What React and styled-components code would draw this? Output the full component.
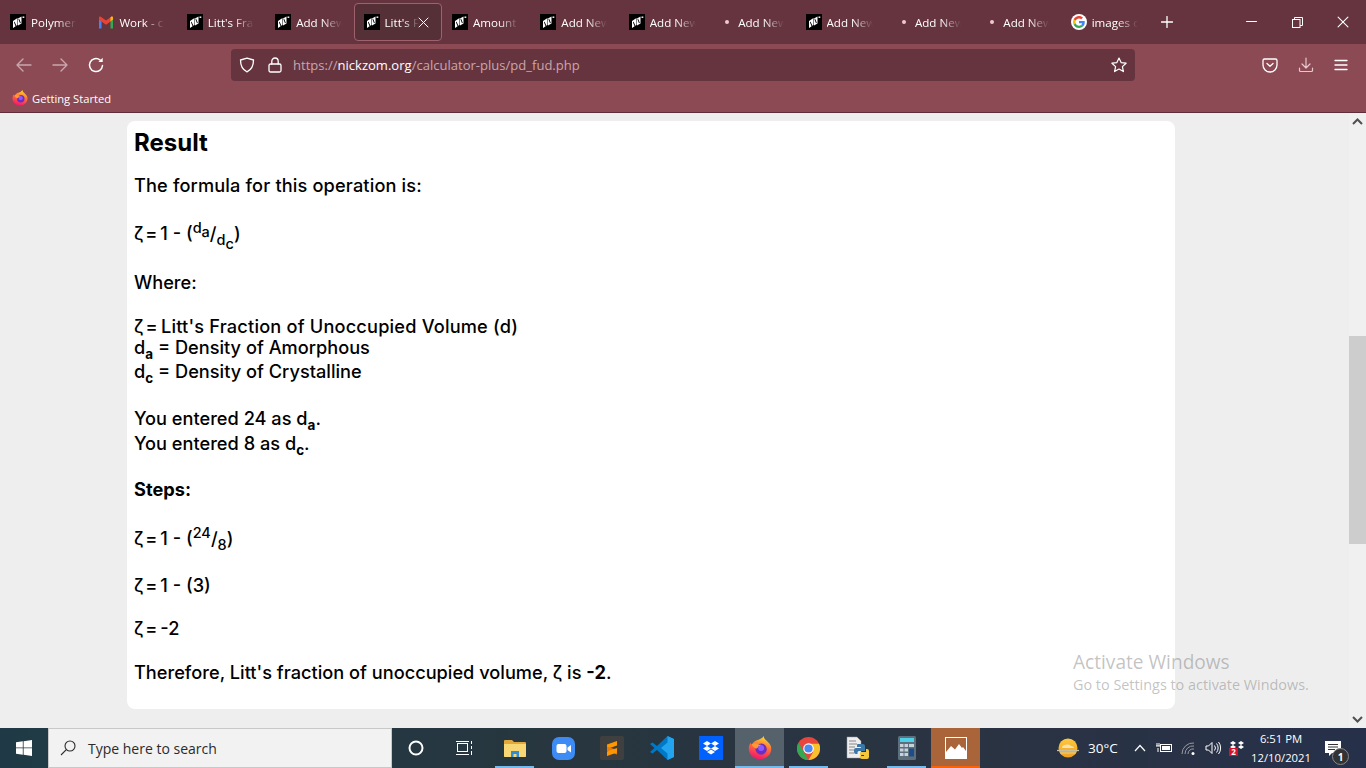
import React from 'react';
import styled, { createGlobalStyle } from 'styled-components';

const GlobalStyle = createGlobalStyle`
  html, body { margin: 0; height: 100%; overflow: hidden; }
  body { font-family: "Open Sans", "Liberation Sans", sans-serif; background: #eeeeee; }
  * { box-sizing: border-box; }
`;

const Screen = styled.div`
  position: relative;
  width: 1366px;
  height: 768px;
  display: flex;
  flex-direction: column;
  overflow: hidden;
`;

/* browser chrome */
const TabStrip = styled.div`
  height: 44px;
  display: flex;
  align-items: center;
  background: #66343f;
`;

const Tab = styled.div`
  position: relative;
  width: 88.4px;
  height: 38px;
  flex: none;
  display: flex;
  align-items: center;
  gap: 5px;
  padding-left: 9px;
  color: #fff;
  font-size: 11.6px;
  border-radius: 4px;
  border: 1px solid ${(p) => (p.$active ? '#a0616e' : 'transparent')};
  background: ${(p) => (p.$active ? '#553037' : 'transparent')};
`;

const TabIcon = styled.span`
  width: 16px;
  height: 16px;
  flex: none;
  display: flex;
  align-items: center;
  justify-content: center;
`;

const TabDot = styled.span`
  width: 4px;
  height: 4px;
  margin-left: 4px;
  border-radius: 50%;
  background: #f0c8cf;
`;

const TabTitle = styled.span`
  width: ${(p) => (p.$active ? '34px' : '46px')};
  white-space: nowrap;
  overflow: hidden;
  -webkit-mask-image: linear-gradient(to right, #000 55%, transparent 100%);
  mask-image: linear-gradient(to right, #000 55%, transparent 100%);
`;

const TabClose = styled.span`
  position: absolute;
  right: 12px;
  top: 13px;
  display: flex;
`;

const NewTab = styled.div`
  width: 12px;
  margin-left: 12px;
  display: flex;
`;

const WindowButtons = styled.div`
  margin-left: auto;
  display: flex;
`;

const WindowButton = styled.div`
  width: 46px;
  height: 44px;
  display: flex;
  align-items: center;
  justify-content: center;
`;

const Toolbar = styled.div`
  height: 41px;
  display: flex;
  align-items: center;
  background: #8c4a55;
`;

const NavGroup = styled.div`
  width: 231px;
  padding-left: 15px;
  display: flex;
  gap: 18px;
`;

const UrlBar = styled.div`
  width: 904px;
  height: 32px;
  display: flex;
  align-items: center;
  padding: 0 8px;
  border-radius: 4px;
  background: #66343f;
`;

const UrlText = styled.div`
  margin-left: 11px;
  flex: 1;
  font-size: 13.05px;
  color: #c9a6ac;
  span { color: #fff; }
`;

const ToolRight = styled.div`
  display: flex;
  margin-left: 127px;
  gap: 19.5px;
`;

const Bookmarks = styled.div`
  height: 28px;
  display: flex;
  align-items: center;
  gap: 4px;
  padding: 0 0 1px 12px;
  font-size: 11.2px;
  color: #fff;
  background: #8c4a55;
  border-bottom: 1px solid #5e2f3a;
`;

/* page */
const Viewport = styled.div`
  flex: 1;
  display: flex;
  background: #eeeeee;
`;

const Content = styled.div`
  width: 1349px;
  padding: 8px 0 0 127px;
`;

const Card = styled.div`
  width: 1048px;
  height: 588px;
  padding: 8px 7px 0;
  background: #fff;
  border-radius: 8px;
  color: #000;
  font-family: Inter, "Open Sans", sans-serif;
  font-size: 18.2px;
  font-weight: 500;
`;

const Heading = styled.h2`
  margin: 0;
  height: 28px;
  line-height: 28px;
  font-size: 24px;
  font-weight: 700;
`;

const Line = styled.div`
  height: 24px;
  line-height: 24px;
  margin-top: ${(p) => p.$gap}px;
  white-space: nowrap;
  letter-spacing: ${(p) => p.$spacing || 0}px;
  font-weight: ${(p) => (p.$bold ? 700 : 500)};
  sup, sub { font-size: 14.5px; line-height: 0; }
  b { font-weight: 700; font-size: 13.5px; }
`;

const Zeta = styled.span`
  word-spacing: -3px;
  margin-right: 1px;
`;

const Scrollbar = styled.div`
  width: 17px;
  display: flex;
  flex-direction: column;
  align-items: center;
  background: #f0f0f0;
`;

const ScrollArrow = styled.div`
  height: 17px;
  display: flex;
  align-items: center;
  justify-content: center;
  margin-top: ${(p) => (p.$bottom ? 'auto' : '0')};
`;

const ScrollThumb = styled.div`
  width: 17px;
  height: 208px;
  margin-top: 206px;
  background: #cdcdcd;
`;

const Watermark = styled.div`
  position: absolute;
  left: 1073px;
  top: 653px;
  color: rgba(110, 110, 110, 0.42);
  line-height: 1;
  pointer-events: none;
`;

const WatermarkTitle = styled.div`
  font-size: 19.1px;
  margin-bottom: 6px;
`;

const WatermarkText = styled.div`
  font-size: 14.4px;
  white-space: nowrap;
`;

/* taskbar */
const Taskbar = styled.div`
  height: 40px;
  display: flex;
  align-items: stretch;
  background: linear-gradient(to right, #1f3a46 0%, #27363f 40%, #2a3343 75%, #26304a 100%);
  color: #fff;
`;

const StartButton = styled.div`
  width: 48px;
  display: flex;
  align-items: center;
  justify-content: center;
`;

const SearchBox = styled.div`
  width: 344px;
  display: flex;
  align-items: center;
  padding-left: 11px;
  gap: 12px;
  font-size: 14px;
  color: #2b2b2b;
  background: #f2f2f2;
  border: 1px solid #c8c8c8;
`;

const TaskItem = styled.div`
  position: relative;
  width: ${(p) => p.$w || 49}px;
  display: flex;
  align-items: center;
  justify-content: center;
  background: ${(p) => p.$bg || 'transparent'};
  &::after {
    content: '';
    display: ${(p) => (p.$line ? 'block' : 'none')};
    position: absolute;
    left: ${(p) => p.$inset || 0}px;
    right: ${(p) => p.$inset || 0}px;
    bottom: 0;
    height: 2px;
    background: ${(p) => p.$line};
  }
`;

const Tray = styled.div`
  margin-left: auto;
  padding-right: 17px;
  display: flex;
  align-items: center;
  font-size: 13.5px;
`;

const Temperature = styled.span`
  margin: 0 10px 0 9px;
`;

const TrayIcon = styled.div`
  width: 24.25px;
  display: flex;
  align-items: center;
  justify-content: center;
`;

const Clock = styled.div`
  width: 64px;
  font-size: 11.3px;
  line-height: 19px;
  text-align: center;
`;

const Notify = styled.div`
  position: relative;
  width: 32px;
  height: 40px;
  margin-left: 4px;
  display: flex;
  align-items: center;
  justify-content: center;
`;

const NotifyBadge = styled.span`
  position: absolute;
  left: 15px;
  top: 20px;
  width: 17px;
  height: 17px;
  display: flex;
  align-items: center;
  justify-content: center;
  border-radius: 50%;
  border: 1.5px solid #888;
  background: #333;
  font-size: 10px;
  font-weight: 700;
`;

/* icons */
const stroke = { fill: 'none', stroke: 'currentColor', strokeLinecap: 'round', strokeLinejoin: 'round' };

const Nickzom = () => (
  <svg width="16" height="16" viewBox="0 0 16 16">
    <rect width="16" height="16" fill="#000" />
    <path d="M3 7 7.500 4V11L3 14ZM8 4.500 11.500 2.500V9.500L8 11.500Z" fill="#fff" />
    <path d="M4.500 7.500 6.500 12 5.700 12.500 4 8.500ZM9 4.500 10.800 8.800 10 9.300 8.500 5.500Z" fill="#000" />
    <rect x="12.500" y="2.500" width="1.800" height="1.400" fill="#fff" />
  </svg>
);

const Gmail = () => (
  <svg width="16" height="13" viewBox="0 0 16 13">
    <path d="M1 12.500V3l2.500 2v7.500Z" fill="#4285f4" />
    <path d="M12.500 12.500V5L15 3v9.500Z" fill="#34a853" />
    <path d="M1 3.500V1.500C1 .6 2 .1 2.800.7L8 4.600 13.200.7C14 .1 15 .6 15 1.500V3.500L12.500 5.400 8 8.700 3.500 5.400Z" fill="#ea4335" />
    <path d="M12.500 5.400 15 3.500V1.500C15 .6 14 .1 13.200.7L12.500 1.200Z" fill="#fbbc04" />
  </svg>
);

const GoogleG = () => (
  <svg width="16" height="16" viewBox="0 0 48 48">
    <circle cx="24" cy="24" r="24" fill="#fff" />
    <g transform="translate(6 6) scale(.75)">
      <path fill="#ea4335" d="M24 9.500c3.500 0 6.700 1.200 9.200 3.600l6.800-6.800C35.900 2.400 30.500 0 24 0 14.600 0 6.500 5.400 2.600 13.200l8 6.200C12.400 13.700 17.700 9.500 24 9.500z" />
      <path fill="#4285f4" d="M47 24.500c0-1.600-.1-3.100-.4-4.500H24v9h12.900c-.6 3-2.200 5.500-4.700 7.200l7.700 6C44.400 37.900 47 31.800 47 24.500z" />
      <path fill="#fbbc05" d="M10.500 28.600c-.5-1.400-.8-3-.8-4.600s.3-3.200.8-4.600l-8-6.200C.9 16.400 0 20.100 0 24s.9 7.600 2.600 10.800z" />
      <path fill="#34a853" d="M24 48c6.500 0 11.900-2.100 15.900-5.800l-7.700-6c-2.100 1.400-4.900 2.300-8.200 2.300-6.300 0-11.600-4.200-13.500-9.900l-8 6.200C6.500 42.600 14.600 48 24 48z" />
    </g>
  </svg>
);

const Firefox = ({ size = 16, id = 'ff' }) => (
  <svg width={size} height={size} viewBox="0 0 32 32">
    <defs>
      <linearGradient id={id} x1=".7" y1="0" x2=".4" y2="1">
        <stop offset="0" stopColor="#ffe226" />
        <stop offset=".45" stopColor="#ff7139" />
        <stop offset="1" stopColor="#f5156c" />
      </linearGradient>
    </defs>
    <path d="M21 0c0 4 3 5 5.500 8C30 11 31 14 31 17c0 8-7 14-15 14S1 25 1 17c0-3 1-6 2.500-8 .2 1.500.8 2.500 1.800 3C6 9 8.500 7 11 6c4-1.500 8-2.500 10-6Z" fill={`url(#${id})`} />
    <circle cx="17.500" cy="17.500" r="7.500" fill="#6a2fc0" />
    <circle cx="17.500" cy="16" r="4" fill="#9059ff" />
    <path d="M4.500 11c3-1.500 6-1.800 8.500-.5 2 1 3 1 4.500 1-1.500 1.500-3 2-4 2 .3 1.500-1 2.500-2.500 3-2.500-.5-5-2.500-6.500-5.500Z" fill="#ff9a2e" />
  </svg>
);

const Back = () => (
  <svg width="18" height="18" viewBox="0 0 18 18" color="#c9a6ac" {...stroke} strokeWidth="1.400">
    <path d="M16 9H2M8 3 2 9l6 6" />
  </svg>
);

const Forward = () => (
  <svg width="18" height="18" viewBox="0 0 18 18" color="#c9a6ac" {...stroke} strokeWidth="1.400">
    <path d="M2 9h14M10 3l6 6-6 6" />
  </svg>
);

const Reload = () => (
  <svg width="18" height="18" viewBox="0 0 18 18" color="#fff" {...stroke} strokeWidth="1.500">
    <path d="M15.500 9.500A6.500 6.500 0 1 1 13 3.900" />
    <path d="M15.700 1.800v4.300h-4.300z" fill="#fff" stroke="none" />
  </svg>
);

const Shield = () => (
  <svg width="16" height="16" viewBox="0 0 16 16" color="#fff" {...stroke} strokeWidth="1.300">
    <path d="M8 1.200 14.500 3c0 6-1.500 9.500-6.500 11.800C3 12.500 1.500 9 1.500 3Z" />
  </svg>
);

const Lock = () => (
  <svg width="14" height="16" viewBox="0 0 14 16" color="#fff" {...stroke} strokeWidth="1.300" style={{ marginLeft: 13 }}>
    <rect x="1" y="7" width="12" height="8" rx="1.500" />
    <path d="M3.800 7V4.200a3.200 3.200 0 0 1 6.400 0V7" />
  </svg>
);

const Star = () => (
  <svg width="16" height="16" viewBox="0 0 16 16" color="#fff" {...stroke} strokeWidth="1.200">
    <path d="M8 1l2.100 4.600 5 .6-3.700 3.400 1 5L8 12.100 3.600 14.600l1-5L.9 6.200l5-.6Z" />
  </svg>
);

const Pocket = () => (
  <svg width="16" height="16" viewBox="0 0 16 16" color="#fff" {...stroke} strokeWidth="1.300">
    <path d="M2.500 2h11A1.500 1.500 0 0 1 15 3.500V8A7 7 0 0 1 1 8V3.500A1.500 1.500 0 0 1 2.500 2Z" />
    <path d="M5 6.500 8 9.300l3-2.800" />
  </svg>
);

const Download = () => (
  <svg width="16" height="16" viewBox="0 0 16 16" color="#e8c6cc" {...stroke} strokeWidth="1.200">
    <path d="M8 1v9.500M4 7l4 4 4-4M1.500 11v2.500a1 1 0 0 0 1 1h11a1 1 0 0 0 1-1V11" />
  </svg>
);

const Menu = () => (
  <svg width="16" height="16" viewBox="0 0 16 16" color="#fff" {...stroke} strokeWidth="1.300">
    <path d="M2 3.500h12M2 8h12M2 12.500h12" />
  </svg>
);

const CloseGlyph = ({ size = 11 }) => (
  <svg width={size} height={size} viewBox="0 0 11 11" color="#fff" {...stroke} strokeWidth="1">
    <path d="M1 1l9 9M10 1l-9 9" />
  </svg>
);

const Plus = () => (
  <svg width="12" height="12" viewBox="0 0 12 12" color="#fff" {...stroke} strokeWidth="1.300">
    <path d="M6 .5v11M.5 6h11" />
  </svg>
);

const Minimize = () => (
  <svg width="11" height="11" viewBox="0 0 11 11" color="#fff" {...stroke} strokeWidth="1">
    <path d="M.5 4.500h10" />
  </svg>
);

const Restore = () => (
  <svg width="11" height="11" viewBox="0 0 11 11" color="#fff" fill="none" stroke="currentColor" strokeWidth="1">
    <rect x=".5" y="2.500" width="7.500" height="8" />
    <path d="M2.500 2.500V.5h8v8H8" />
  </svg>
);

const Chevron = ({ up }) => (
  <svg width="11" height="7" viewBox="0 0 11 7" fill="none" stroke="#505050" strokeWidth="2">
    <path d={up ? 'M1 6l4.500-4.500L10 6' : 'M1 1l4.500 4.500L10 1'} />
  </svg>
);

const WindowsLogo = () => (
  <svg width="16" height="16" viewBox="0 0 16 16" fill="#fff">
    <path d="M0 2.300 6.800 1.300V7.500H0ZM7.600 1.200 16 0V7.500H7.600ZM0 8.300H6.800V14.700L0 13.700ZM7.600 8.300H16V16L7.600 14.800Z" />
  </svg>
);

const SearchGlyph = () => (
  <svg width="16" height="16" viewBox="0 0 16 16" fill="none" stroke="#2b2b2b" strokeWidth="1.100">
    <circle cx="10" cy="6" r="5" />
    <path d="M6.300 9.700 1 15" />
  </svg>
);

const Cortana = () => (
  <svg width="16" height="16" viewBox="0 0 16 16" fill="none" stroke="#fff" strokeWidth="2" style={{ marginRight: 2 }}>
    <circle cx="8" cy="8" r="6.500" />
  </svg>
);

const TaskView = () => (
  <svg width="17" height="16" viewBox="0 0 17 16" fill="none" stroke="#fff" strokeWidth="1" style={{ marginRight: 2 }}>
    <rect x="1.500" y="3.500" width="10" height="8" />
    <path d="M0 1.500h13M0 14.500h13M15.500 1v3M15.500 6v3M15.500 11v4" />
  </svg>
);

const Explorer = () => (
  <svg width="22" height="20" viewBox="0 0 22 20">
    <path d="M0 3a1 1 0 0 1 1-1h7l2 2h11a1 1 0 0 1 1 1v13a1 1 0 0 1-1 1H1a1 1 0 0 1-1-1Z" fill="#e2a93a" />
    <path d="M0 6h22v12a1 1 0 0 1-1 1H1a1 1 0 0 1-1-1Z" fill="#f8d775" />
    <path d="M7 13h8v6h-2.500v-3h-3v3H7Z" fill="#2f8fd6" />
  </svg>
);

const Zoom = () => (
  <svg width="23" height="23" viewBox="0 0 23 23">
    <rect width="23" height="23" rx="7" fill="#3d8cf5" />
    <rect x="4.500" y="7" width="10" height="9" rx="2" fill="#fff" />
    <path d="M15.500 10.500 19 8v7.500l-3.500-2.500Z" fill="#fff" />
  </svg>
);

const Sublime = () => (
  <svg width="24" height="24" viewBox="0 0 24 24" style={{ marginRight: 2 }}>
    <rect width="24" height="24" rx="2" fill="#3f3f3f" />
    <path d="M7 8.500 17 5v4.500L7 13Z" fill="#ff9800" />
    <path d="M7 10.500l10 3.500v4.500L7 15Z" fill="#e97c0c" />
    <path d="M7 15.500 17 12v4.500L7 20Z" fill="#ff9800" />
  </svg>
);

const VSCode = () => (
  <svg width="24" height="24" viewBox="0 0 24 24">
    <path d="M17.500 0 24 3v18l-6.500 3L7 14l-4.500 3.500L0 16l4.500-4L0 8l2.500-1.500L7 10Z" fill="#0078c8" />
    <path d="M17.500 0 24 3v18l-6.500 3Zm0 6.500L11 12l6.500 5.500Z" fill="#22a5ee" fillRule="evenodd" />
  </svg>
);

const DropboxTile = () => (
  <svg width="24" height="24" viewBox="0 0 24 24">
    <rect width="24" height="24" fill="#0061fe" />
    <path d="M8 5l4 2.500L8 10 4 7.500ZM16 5l4 2.500L16 10l-4-2.500ZM8 10l4 2.500L8 15l-4-2.500ZM16 10l4 2.500L16 15l-4-2.500ZM8 16l4-2.500 4 2.500-4 2.500Z" fill="#fff" />
  </svg>
);

const Chrome = () => (
  <svg width="23" height="23" viewBox="0 0 24 24">
    <circle cx="12" cy="12" r="12" fill="#e8453c" />
    <path d="M1.600 6 7 15.500 12 24A12 12 0 0 1 1.600 6Z" fill="#34a853" />
    <path d="M12 24l5-8.500L12 7h11A12 12 0 0 1 12 24Z" fill="#fbc02d" />
    <circle cx="12" cy="12" r="5.500" fill="#fff" />
    <circle cx="12" cy="12" r="4.300" fill="#4a8af4" />
  </svg>
);

const PythonFile = () => (
  <svg width="24" height="24" viewBox="0 0 24 24">
    <path d="M1 1h10l4 4v17H1Z" fill="#eee" stroke="#999" strokeWidth=".5" />
    <path d="M3 5h7M3 8h8M3 11h6M3 14h5M3 17h5" stroke="#888" strokeWidth="1" />
    <path d="M12 8h5a2 2 0 0 1 2 2v5h-6a1.500 1.500 0 0 0-1.500 1.500V18H10a2 2 0 0 1-2-2v-2a2 2 0 0 1 2-2h5v-1h-4V9a1 1 0 0 1 1-1Z" fill="#3b77a8" />
    <path d="M21 23h-5a2 2 0 0 1-2-2v-1h4v-1h-4v-2a1 1 0 0 1 1-1h5v-3h1a2 2 0 0 1 2 2v6a2 2 0 0 1-2 2Z" fill="#f5c83c" />
  </svg>
);

const Calculator = () => (
  <svg width="18" height="24" viewBox="0 0 18 24">
    <rect width="18" height="24" rx="1.500" fill="#5d6e7c" />
    <rect x="2" y="2" width="14" height="4" fill="#4dd0e8" />
    <g fill="#c7d2da">
      <rect x="2" y="8" width="3.500" height="3" /><rect x="6.500" y="8" width="3.500" height="3" /><rect x="11" y="8" width="5" height="3" />
      <rect x="2" y="12.500" width="3.500" height="3" /><rect x="6.500" y="12.500" width="3.500" height="3" />
      <rect x="2" y="17" width="3.500" height="3" /><rect x="6.500" y="17" width="3.500" height="3" />
    </g>
    <rect x="11" y="12.500" width="5" height="8" fill="#1d4e89" />
  </svg>
);

const Photos = () => (
  <svg width="22" height="22" viewBox="0 0 22 22">
    <rect x=".5" y=".5" width="21" height="21" fill="none" stroke="#fff" />
    <path d="M1 21V15l5-6 4 3.500L14 7l3 4 1-1 3 4v7Z" fill="#fff" />
  </svg>
);

const Weather = () => (
  <svg width="22" height="20" viewBox="0 0 22 20">
    <defs>
      <linearGradient id="sun" x1="0" y1="0" x2="0" y2="1">
        <stop offset="0" stopColor="#ffc83d" />
        <stop offset="1" stopColor="#f0a020" />
      </linearGradient>
    </defs>
    <circle cx="11" cy="10" r="9.500" fill="url(#sun)" />
    <path d="M5 9c2-3 7-3 9-1 2 0 3 1 3 2H5Z" fill="#f3e2b0" />
    <path d="M0 12.500h22" stroke="#c9bfa2" strokeWidth="1.300" />
    <path d="M3 15h16" stroke="#e0c88a" strokeWidth="1.300" />
  </svg>
);

const TrayChevron = () => (
  <svg width="12" height="8" viewBox="0 0 12 8" fill="none" stroke="#fff" strokeWidth="1.200">
    <path d="M1 7l5-5.500L11 7" />
  </svg>
);

const Battery = () => (
  <svg width="16" height="12" viewBox="0 0 16 12" fill="none" stroke="#fff">
    <rect x="4.500" y="2.500" width="11" height="7" />
    <rect x="6" y="4" width="8" height="4" fill="#fff" stroke="none" />
    <path d="M1 1v3M3 1v3M0 4h4M2 6v4" />
  </svg>
);

const Wifi = () => (
  <svg width="14" height="13" viewBox="0 0 14 13" fill="none" stroke="#9a9a9a" strokeWidth="1">
    <path d="M1 12A11 11 0 0 1 13 1M4 12a8 8 0 0 1 9-8M7 12a5 5 0 0 1 6-5" />
    <circle cx="12" cy="11.500" r="1.500" fill="#fff" stroke="none" />
  </svg>
);

const Speaker = () => (
  <svg width="16" height="14" viewBox="0 0 16 14" fill="none" stroke="#fff" strokeWidth="1">
    <path d="M1 5h2.500L7 1.500v11L3.500 9H1ZM9.500 4.500a4 4 0 0 1 0 5M11.500 2.500a7 7 0 0 1 0 9M13.500 1a9.500 9.500 0 0 1 0 12" />
  </svg>
);

const TrayDropbox = () => (
  <svg width="16" height="16" viewBox="0 0 16 16">
    <path d="M4 1l3 2-3 2-3-2ZM12 1l3 2-3 2-3-2ZM4 5l3 2-3 2-3-2ZM12 5l3 2-3 2-3-2Z" fill="#fff" />
    <rect x="0" y="8" width="9" height="8" fill="#d8112a" />
    <text x="4.500" y="14.800" fontSize="8" fontWeight="700" textAnchor="middle" fill="#fff" fontFamily="Open Sans">2</text>
  </svg>
);

const Message = () => (
  <svg width="16" height="15" viewBox="0 0 16 15">
    <path d="M0 0h16v12H7l-3 3v-3H0Z" fill="#fff" />
    <path d="M3 3.500h10M3 6h10M3 8.500h7" stroke="#333" />
  </svg>
);

const tabs = [
  { icon: 'nick', title: 'Polymer' },
  { icon: 'gmail', title: 'Work - c' },
  { icon: 'nick', title: "Litt's Frac" },
  { icon: 'nick', title: 'Add New' },
  { icon: 'nick', title: "Litt's F", active: true },
  { icon: 'nick', title: 'Amount' },
  { icon: 'nick', title: 'Add New' },
  { icon: 'nick', title: 'Add New' },
  { icon: 'dot', title: 'Add New' },
  { icon: 'nick', title: 'Add New' },
  { icon: 'dot', title: 'Add New' },
  { icon: 'dot', title: 'Add New' },
  { icon: 'google', title: 'images o' },
];

function TabGlyph({ kind }) {
  if (kind === 'gmail') return <Gmail />;
  if (kind === 'google') return <GoogleG />;
  if (kind === 'dot') return <TabDot />;
  return <Nickzom />;
}

export default function App() {
  return (
    <Screen>
      <GlobalStyle />
      <TabStrip>
        {tabs.map((tab, i) => (
          <Tab key={i} $active={tab.active}>
            <TabIcon>
              <TabGlyph kind={tab.icon} />
            </TabIcon>
            <TabTitle $active={tab.active}>{tab.title}</TabTitle>
            {tab.active && (
              <TabClose>
                <CloseGlyph />
              </TabClose>
            )}
          </Tab>
        ))}
        <NewTab>
          <Plus />
        </NewTab>
        <WindowButtons>
          <WindowButton><Minimize /></WindowButton>
          <WindowButton><Restore /></WindowButton>
          <WindowButton><CloseGlyph size={12} /></WindowButton>
        </WindowButtons>
      </TabStrip>
      <Toolbar>
        <NavGroup>
          <Back />
          <Forward />
          <Reload />
        </NavGroup>
        <UrlBar>
          <Shield />
          <Lock />
          <UrlText>
            https://<span>nickzom.org</span>/calculator-plus/pd_fud.php
          </UrlText>
          <Star />
        </UrlBar>
        <ToolRight>
          <Pocket />
          <Download />
          <Menu />
        </ToolRight>
      </Toolbar>
      <Bookmarks>
        <Firefox id="ff-small" />
        Getting Started
      </Bookmarks>
      <Viewport>
        <Content>
          <Card>
            <Heading>Result</Heading>
            <Line $gap={16} $spacing={0.14}>The formula for this operation is:</Line>
            <Line $gap={24}><Zeta>ζ = </Zeta>1 - (<sup>d<sub>a</sub></sup>/<sub>d<sub>c</sub></sub>)</Line>
            <Line $gap={25}>Where:</Line>
            <Line $gap={20} $spacing={0.18}><Zeta>ζ = </Zeta>Litt's Fraction of Unoccupied Volume (d)</Line>
            <Line $gap={-3}>d<sub><b>a</b></sub> = Density of Amorphous</Line>
            <Line $gap={0}>d<sub><b>c</b></sub> = Density of Crystalline</Line>
            <Line $gap={23}>You entered 24 as d<sub><b>a</b></sub>.</Line>
            <Line $gap={1}>You entered 8 as d<sub><b>c</b></sub>.</Line>
            <Line $gap={22} $bold>Steps:</Line>
            <Line $gap={25}><Zeta>ζ = </Zeta>1 - (<sup>24</sup>/<sub>8</sub>)</Line>
            <Line $gap={23}><Zeta>ζ = </Zeta>1 - (3)</Line>
            <Line $gap={19}><Zeta>ζ = </Zeta>-2</Line>
            <Line $gap={20}>Therefore, Litt's fraction of unoccupied volume, ζ is <strong>-2</strong>.</Line>
          </Card>
        </Content>
        <Scrollbar>
          <ScrollArrow><Chevron up /></ScrollArrow>
          <ScrollThumb />
          <ScrollArrow $bottom><Chevron /></ScrollArrow>
        </Scrollbar>
      </Viewport>
      <Watermark>
        <WatermarkTitle>Activate Windows</WatermarkTitle>
        <WatermarkText>Go to Settings to activate Windows.</WatermarkText>
      </Watermark>
      <Taskbar>
        <StartButton><WindowsLogo /></StartButton>
        <SearchBox>
          <SearchGlyph />
          Type here to search
        </SearchBox>
        <TaskItem><Cortana /></TaskItem>
        <TaskItem><TaskView /></TaskItem>
        <TaskItem $line="#76b9ed" $inset={5}><Explorer /></TaskItem>
        <TaskItem><Zoom /></TaskItem>
        <TaskItem><Sublime /></TaskItem>
        <TaskItem><VSCode /></TaskItem>
        <TaskItem><DropboxTile /></TaskItem>
        <TaskItem $bg="#56626b" $line="#76b9ed"><Firefox size={24} id="ff-large" /></TaskItem>
        <TaskItem $line="#76b9ed" $inset={5}><Chrome /></TaskItem>
        <TaskItem><PythonFile /></TaskItem>
        <TaskItem $line="#76b9ed" $inset={5}><Calculator /></TaskItem>
        <TaskItem $bg="#a9643a" $line="#f7630c"><Photos /></TaskItem>
        <Tray>
          <Weather />
          <Temperature>30°C</Temperature>
          <TrayIcon><TrayChevron /></TrayIcon>
          <TrayIcon><Battery /></TrayIcon>
          <TrayIcon><Wifi /></TrayIcon>
          <TrayIcon><Speaker /></TrayIcon>
          <TrayIcon><TrayDropbox /></TrayIcon>
          <Clock>6:51 PM<br />12/10/2021</Clock>
          <Notify>
            <Message />
            <NotifyBadge>1</NotifyBadge>
          </Notify>
        </Tray>
      </Taskbar>
    </Screen>
  );
}
